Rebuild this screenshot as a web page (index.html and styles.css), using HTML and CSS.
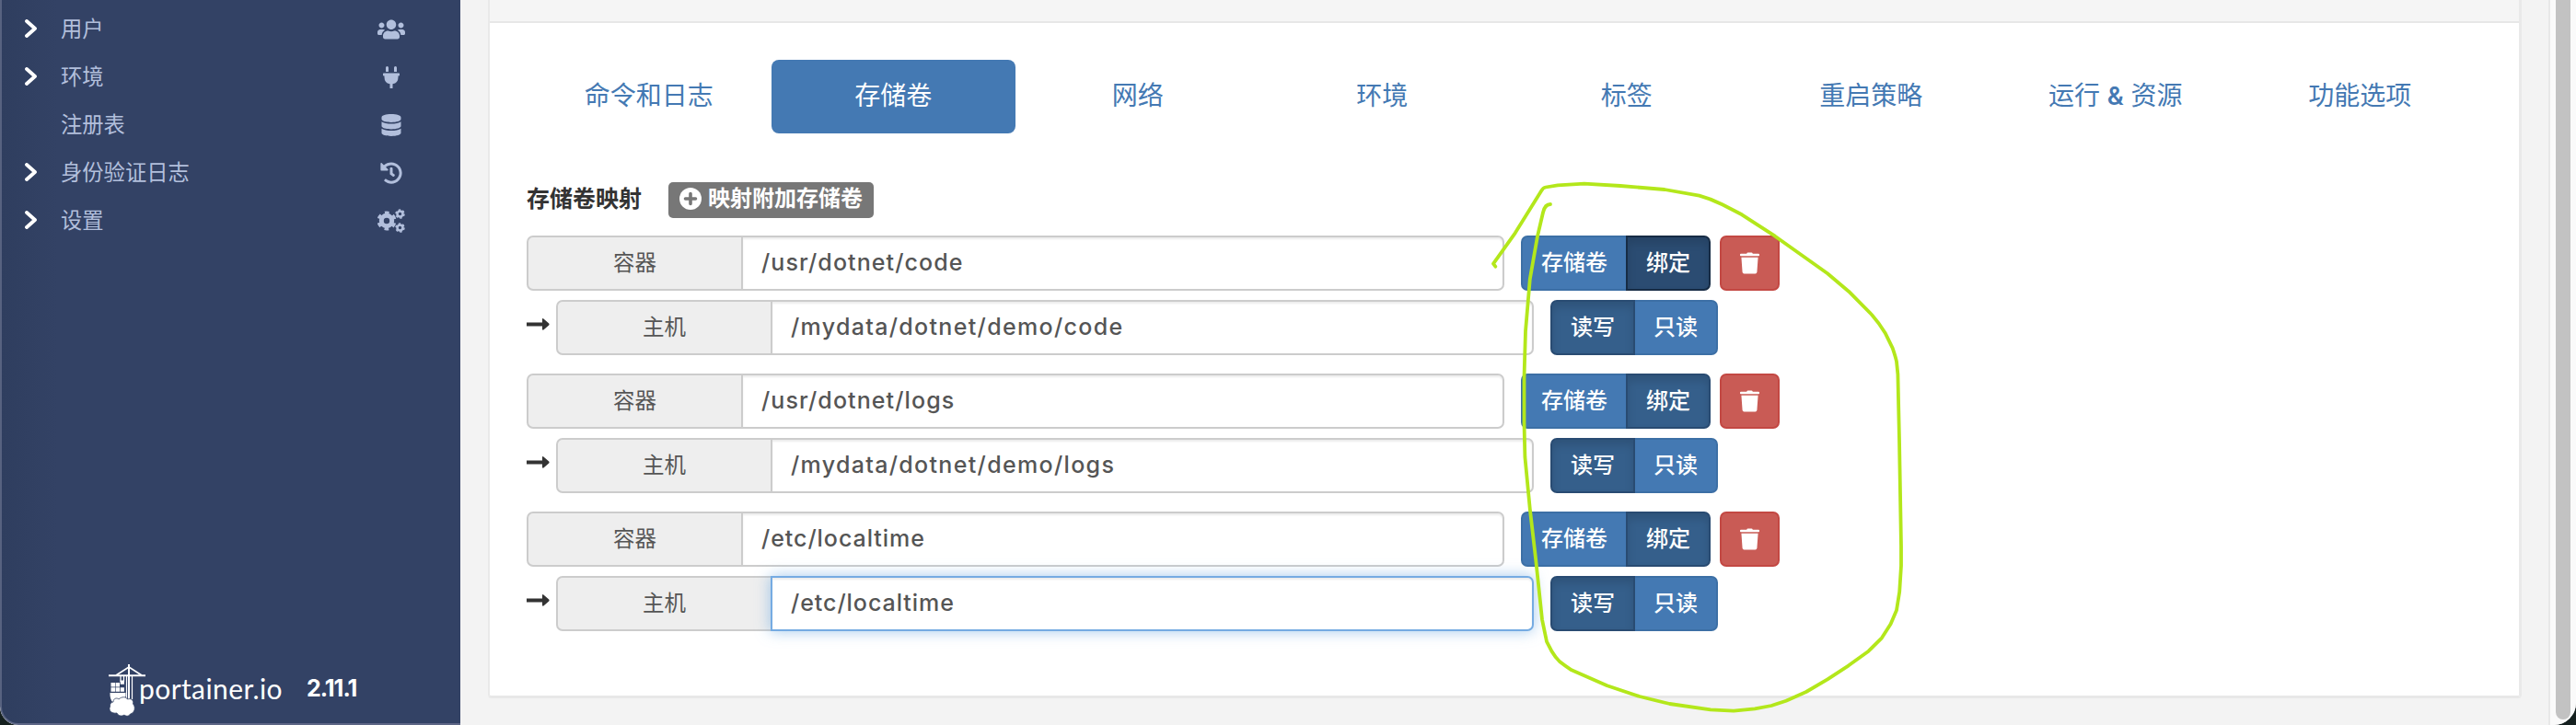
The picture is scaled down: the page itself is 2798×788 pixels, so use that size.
FILE: index.html
```html
<!DOCTYPE html>
<html lang="zh-CN">
<head>
<meta charset="utf-8">
<title>Portainer</title>
<link rel="stylesheet" href="styles.css">
</head>
<body>
<div class="window">
  <aside class="sidebar">
    <ul class="menu">
      <li class="menu-item"><svg class="chevron" viewBox="0 0 14 20"><path d="M2 2l9 8-9 8"/></svg><span class="menu-label">用户</span>
        <svg class="menu-icon" viewBox="0 0 640 512"><path d="M96 224c35.300 0 64-28.700 64-64s-28.700-64-64-64-64 28.700-64 64 28.700 64 64 64zm448 0c35.300 0 64-28.700 64-64s-28.700-64-64-64-64 28.700-64 64 28.700 64 64 64zm32 32h-64c-17.600 0-33.500 7.100-45.100 18.600 40.300 22.100 68.900 62 75.100 109.400h66c17.700 0 32-14.300 32-32v-32c0-35.300-28.700-64-64-64zm-256 0c61.900 0 112-50.100 112-112S381.900 32 320 32 208 82.100 208 144s50.100 112 112 112zm76.800 32h-8.300c-20.800 10-43.900 16-68.500 16s-47.600-6-68.500-16h-8.300C179.600 288 128 339.600 128 403.200V432c0 26.500 21.500 48 48 48h288c26.500 0 48-21.500 48-48v-28.800c0-63.600-51.600-115.200-115.200-115.200zm-223.700-13.400C161.500 263.100 145.600 256 128 256H64c-35.300 0-64 28.700-64 64v32c0 17.700 14.300 32 32 32h65.900c6.300-47.400 34.900-87.300 75.200-109.400z"/></svg></li>
      <li class="menu-item"><svg class="chevron" viewBox="0 0 14 20"><path d="M2 2l9 8-9 8"/></svg><span class="menu-label">环境</span>
        <svg class="menu-icon" viewBox="0 0 384 512"><path d="M320 32a32 32 0 0 0-64 0v96h64zm48 128H16a16 16 0 0 0-16 16v32a16 16 0 0 0 16 16h16v32a160.100 160.100 0 0 0 128 156.800V512h64v-99.200A160.100 160.100 0 0 0 352 256v-32h16a16 16 0 0 0 16-16v-32a16 16 0 0 0-16-16zM128 32a32 32 0 0 0-64 0v96h64z"/></svg></li>
      <li class="menu-item"><span class="chevron"></span><span class="menu-label">注册表</span>
        <svg class="menu-icon" viewBox="0 0 448 512"><path d="M448 73.100v45.800C448 159.100 347.700 192 224 192S0 159.100 0 118.900V73.100C0 32.900 100.300 0 224 0s224 32.900 224 73.100zM448 176v102.900C448 319.100 347.700 352 224 352S0 319.100 0 278.900V176c48.100 33.100 136.200 48.600 224 48.600S399.900 209.100 448 176zm0 160v102.900C448 479.100 347.700 512 224 512S0 479.100 0 438.900V336c48.100 33.100 136.200 48.600 224 48.600S399.900 369.100 448 336z"/></svg></li>
      <li class="menu-item"><svg class="chevron" viewBox="0 0 14 20"><path d="M2 2l9 8-9 8"/></svg><span class="menu-label">身份验证日志</span>
        <svg class="menu-icon" viewBox="0 0 512 512"><path d="M504 255.500c.3 136.600-111.200 248.400-247.800 248.500-59 0-113.200-20.500-155.800-54.900-11.100-8.900-11.900-25.500-1.800-35.600l11.300-11.300c8.600-8.600 22.400-9.600 31.900-2C173.100 425.100 212.900 440 256 440c101.700 0 184-82.300 184-184 0-101.700-82.300-184-184-184-48.800 0-93.100 19-126.100 49.900l50.800 50.800c10.100 10.100 2.900 27.300-11.300 27.300H24c-8.800 0-16-7.200-16-16V38.600c0-14.300 17.200-21.400 27.300-11.300l49.400 49.400C129.200 34.100 189.600 8 256 8c136.800 0 247.700 110.800 248 247.500zM323.100 334.200l9.800-12.600c8.100-10.500 6.300-25.500-4.200-33.700L288 256.300V152c0-13.300-10.700-24-24-24h-16c-13.300 0-24 10.700-24 24v135.700l65.400 50.900c10.500 8.100 25.500 6.300 33.700-4.400z"/></svg></li>
      <li class="menu-item"><svg class="chevron" viewBox="0 0 14 20"><path d="M2 2l9 8-9 8"/></svg><span class="menu-label">设置</span>
        <svg class="menu-icon gears" viewBox="0 0 30 26"><circle cx="10" cy="13" r="5.700" stroke-width="5"/><circle cx="10" cy="13" r="9" stroke-width="3" stroke-dasharray="4.700 4.725" stroke-dashoffset="-2.360"/><g stroke-width="2.600"><circle cx="24.500" cy="5.500" r="3"/><circle cx="24.500" cy="20.500" r="3"/></g><g stroke-width="1.500" stroke-dasharray="2.400 2.312"><circle cx="24.500" cy="5.500" r="4.500"/><circle cx="24.500" cy="20.500" r="4.500"/></g></svg></li>
    </ul>
    <footer class="brand">
      <svg class="crane" viewBox="0 0 40 60"><g fill="none" stroke="#fff"><path stroke-width="2" d="M22 0v38M0 12.200h40"/><path stroke-width="1.600" d="M8 12L22 3l14 9"/><path stroke-width="1.200" d="M13 13v6M16.500 13v6M19.500 13v25M25.500 13v25"/></g><path fill="#fff" d="M2.500 20h4.500v4.500H2.500zM7.600 20H12v4.500H7.600zM2.500 25.200H7v4.500H2.500zM7.600 25.200H12v4.500H7.600zM12.700 17.500h4.200v4.200h-4.200zM12.700 25.200h4.200v4.500h-4.200zM1.500 31h17v4l-8 7H5q-4-4-3.500-11z"/><path fill="#fff" stroke="#334265" stroke-width=".8" d="M5 41c0-4 4-5 6-3 3-3 8-3 9.500 0 4-1.500 7 1.500 6 5 3.500 4 1.500 10-3 11-1.500 3-5 2.500-6.500 1-2.500 2-7 1-8-2C3 54-.5 50 1.500 46 1 43 3 41 5 41z"/></svg>
      <span class="brand-name">portainer.io</span>
      <span class="version">2.11.1</span>
    </footer>
  </aside>
  <main class="content">
    <section class="panel">
      <header class="panel-head"></header>
      <div class="panel-body">
        <nav class="tabs">
          <a class="tab">命令和日志</a><a class="tab active">存储卷</a><a class="tab">网络</a><a class="tab">环境</a><a class="tab">标签</a><a class="tab">重启策略</a><a class="tab">运行 <b class="amp">&amp;</b> 资源</a><a class="tab">功能选项</a>
        </nav>
        <div class="section-head">
          <span class="section-title">存储卷映射</span>
          <span class="badge"><svg class="plus" viewBox="0 0 24 24"><circle class="disc" cx="12" cy="12" r="12"/><path d="M12 6.500v11M6.500 12h11"/></svg>映射附加存储卷</span>
        </div>
        <div class="volume">
          <div class="row"><label class="group"><span class="addon">容器</span><span class="input"><span class="v1">/usr/dotnet/code</span></span></label><div class="btns"><span class="btn">存储卷</span><span class="btn on pressed">绑定</span></div><span class="btn danger"><svg class="trash" viewBox="0 0 22 24"><path d="M7.500 1.200Q8 0 9 0h4q1 0 1.500 1.200H21q1 0 1 1v1q0 .8-1 .8H1q-1 0-1-.8v-1q0-1 1-1zM1.500 5.500h19l-1.200 16.700q-.2 1.800-2 1.800H4.700q-1.800 0-2-1.800z"/></svg></span></div>
          <div class="row"><svg class="arrow" viewBox="0 0 25 13"><path d="M0 4.500h17V1.200q0-1.700 1.400-.8l5.800 5.200q.8.900 0 1.800l-5.800 5q-1.400.9-1.400-.8V8.500H0z"/></svg><label class="group"><span class="addon">主机</span><span class="input"><span class="v2">/mydata/dotnet/demo/code</span></span></label><div class="btns"><span class="btn on">读写</span><span class="btn">只读</span></div></div>
        </div>
        <div class="volume">
          <div class="row"><label class="group"><span class="addon">容器</span><span class="input"><span class="v1">/usr/dotnet/logs</span></span></label><div class="btns"><span class="btn">存储卷</span><span class="btn on">绑定</span></div><span class="btn danger"><svg class="trash" viewBox="0 0 22 24"><path d="M7.500 1.200Q8 0 9 0h4q1 0 1.500 1.200H21q1 0 1 1v1q0 .8-1 .8H1q-1 0-1-.8v-1q0-1 1-1zM1.500 5.500h19l-1.200 16.700q-.2 1.800-2 1.800H4.700q-1.800 0-2-1.800z"/></svg></span></div>
          <div class="row"><svg class="arrow" viewBox="0 0 25 13"><path d="M0 4.500h17V1.200q0-1.700 1.400-.8l5.800 5.200q.8.900 0 1.800l-5.800 5q-1.400.9-1.400-.8V8.500H0z"/></svg><label class="group"><span class="addon">主机</span><span class="input"><span class="v2">/mydata/dotnet/demo/logs</span></span></label><div class="btns"><span class="btn on">读写</span><span class="btn">只读</span></div></div>
        </div>
        <div class="volume">
          <div class="row"><label class="group"><span class="addon">容器</span><span class="input"><span class="v3">/etc/localtime</span></span></label><div class="btns"><span class="btn">存储卷</span><span class="btn on">绑定</span></div><span class="btn danger"><svg class="trash" viewBox="0 0 22 24"><path d="M7.500 1.200Q8 0 9 0h4q1 0 1.500 1.200H21q1 0 1 1v1q0 .8-1 .8H1q-1 0-1-.8v-1q0-1 1-1zM1.500 5.500h19l-1.200 16.700q-.2 1.800-2 1.800H4.700q-1.800 0-2-1.800z"/></svg></span></div>
          <div class="row"><svg class="arrow" viewBox="0 0 25 13"><path d="M0 4.500h17V1.200q0-1.700 1.400-.8l5.800 5.200q.8.900 0 1.800l-5.800 5q-1.400.9-1.400-.8V8.500H0z"/></svg><label class="group"><span class="addon">主机</span><span class="input focus"><span class="v3">/etc/localtime</span></span></label><div class="btns"><span class="btn on">读写</span><span class="btn">只读</span></div></div>
        </div>
      </div>
    </section>
  </main>
  <div class="scrollbar"><div class="thumb"></div></div>
</div>
<svg class="ink" viewBox="0 0 2798 788"><path d="M1624.300 289.700L1622 286.700 1645.700 253.300 1674.300 207.300Q1676 204 1679 203.500L1692 201.300 1720.700 199.700 1760 202 1808 206 1845.700 212.700Q1858 216 1870.700 222.300L1892 233.300 1928 256.700 1985 297.300 2008 316.700 2033 342Q2041 351 2047.500 361.700L2055.700 378.300Q2059 388 2060 393L2061.400 406.700 2063 478 2065 593.300V615L2063.200 643.300 2060 663.300 2053.600 678.300 2044 693.300 2029.600 707.700 2008 723.300 1985 738.300 1961.800 752 1940 761.700 1924 767 1906 770.300 1883 772.700 1858 771.300 1813.600 765 1781 757 1745.700 745.300 1707 728.300Q1699 723 1694 719 1689 714 1685.700 708.300L1680 697.300 1675 673.300 1668 606.700 1661.800 553.300 1656.400 496.700 1655.500 460V410L1657 360 1661.800 303.300 1670 256.700 1676 231Q1678 222 1684 222"/></svg>
</body>
</html>
```
FILE: styles.css
```css
* { box-sizing: border-box; }
body {
  margin: 0;
  background: #15201f;
  font-family: Inter, "Noto Sans CJK SC", sans-serif;
  font-size: 24px;
  color: #333;
}
.window {
  display: flex;
  width: 2798px;
  height: 788px;
  background: #f3f3f3;
  border-radius: 0 0 24px 20px;
  overflow: hidden;
}
.sidebar {
  display: flex;
  flex-direction: column;
  justify-content: space-between;
  width: 500px;
  background: linear-gradient(90deg, #2f3e5f, #334265 60px);
  border-left: 2px solid #576280;
  border-bottom: 2px solid #5d6686;
  border-bottom-left-radius: 20px;
}
.menu { list-style: none; margin: 0; padding: 5px 0 0; }
.menu-item {
  display: flex;
  align-items: center;
  height: 52px;
  padding: 0 60px 0 25px;
  color: #b2bfdc;
}
.chevron { width: 14px; height: 20px; margin-right: 25px; fill: none; stroke: #fff; stroke-width: 3.8; stroke-linecap: round; stroke-linejoin: round; }
.menu-label { flex: 1; font-size: 23.3px; line-height: 50px; padding-top: 2px; }
.menu-icon { width: 30px; height: 24px; margin: 2px 0 0; fill: #b2bfdc; }
.gears { fill: none; stroke: #b2bfdc; height: 26px; }
.brand { display: flex; height: 64px; padding-left: 116px; color: #fff; }
.crane { width: 40px; height: 60px; }
.brand-name { margin: 6px 0 0 -7px; width: 182px; font-family: Lato, sans-serif; font-size: 30px; line-height: 40px; letter-spacing: .4px; }
.version { margin-top: 6px; font-size: 25px; font-weight: 700; line-height: 40px; letter-spacing: -1px; }

.content { width: 2268px; padding-left: 30px; }
.panel { width: 2209px; height: 759px; border-left: 2px solid #e9e9e9; border-right: 3px solid #e9e9e9; border-bottom: 3px solid #e8e8e8; border-radius: 0 0 4px 4px; background: #fff; }
.panel-head { height: 25px; background: #f5f5f5; border-bottom: 2px solid #e7e7e7; }
.panel-body { padding: 40px; }
.tabs { display: grid; grid-template-columns: repeat(8, 1fr); height: 80px; }
.tab { color: #4479b3; font-size: 28px; line-height: 79px; text-align: center; border-radius: 8px; }
.tab.active { color: #fff; background: #4479b3; }
.amp { font-size: 27px; font-weight: 600; }
.section-head { display: flex; align-items: center; margin-top: 53px; height: 39px; }
.section-title { width: 154px; font-size: 25px; font-weight: 700; line-height: 34px; margin-top: -4px; }
.badge { display: flex; align-items: center; width: 223px; height: 39px; padding: 0 0 4px 12px; color: #fff; background: #777; border-radius: 5px; font-weight: 700; line-height: 34px; }
.plus { width: 24px; height: 24px; margin-right: 7px; fill: none; stroke: #777; stroke-width: 3.6; stroke-linecap: round; }
.disc { fill: #fff; stroke: none; }
.section-head + .volume { margin-top: 19px; }
.volume { display: flex; flex-direction: column; gap: 10px; margin-bottom: 20px; }
.row { display: flex; align-items: center; height: 60px; }
.arrow { width: 25px; height: 13px; margin: -8px 7px 0 0; fill: #333; }
.group { display: flex; width: 1062px; height: 60px; margin-right: 18px; }
.addon { width: 235px; margin-right: -2px; line-height: 56px; text-align: center; color: #555; background: #eee; border: 2px solid #ccc; border-radius: 7px 0 0 7px; font-size: 23.500px; }
.input { flex: 1; padding-left: 20px; line-height: 55px; color: #555; font-weight: 500; font-size: 25px; background: #fff; border: 2px solid #ccc; border-radius: 0 7px 7px 0; box-shadow: inset 0 2px 2px rgba(0,0,0,.075); }
.v1 { letter-spacing: 1.1px; }
.v2 { letter-spacing: 1.33px; }
.v3 { letter-spacing: .95px; }
.focus { border-color: #75abe2; position: relative; box-shadow: inset 0 2px 2px rgba(0,0,0,.075), 0 0 16px rgba(102,165,225,.6); }
.btns { display: flex; margin-right: 10px; }
.btn { height: 60px; padding: 0 20px; line-height: 55px; font-weight: 500; color: #fff; background: #4479b3; border: 2px solid #3c6fa5; border-radius: 7px; }
.btns .btn:first-child { border-radius: 7px 0 0 7px; border-right-color: #4479b3; }
.btns .btn:last-child { margin-left: -2px; border-radius: 0 7px 7px 0; }
.btns .btn:last-child:not(.on) { border-left-color: #4479b3; }
.btns .btn.on { position: relative; background: #355f8b; border-color: #294b72; box-shadow: inset 0 6px 10px rgba(0,0,0,.125); }
.btns .btn.pressed { background: #2b4c72; border-color: #172c45; }
.danger { display: flex; align-items: center; justify-content: center; width: 65px; background: #c95b55; border-color: #c34843; }
.trash { width: 21px; height: 24px; margin-top: -1px; fill: #fff; }
.scrollbar { width: 30px; padding: 0 0 0 6px; background: #fafafa; border-left: 2px solid #e8e8e8; }
.thumb { width: 16px; height: 782px; background: #c2c2c2; border-radius: 0 0 8px 8px; }
.ink { position: absolute; inset: 0; width: 2798px; height: 788px; fill: none; stroke: #b3e71b; stroke-width: 3.8; stroke-linecap: round; stroke-linejoin: round; pointer-events: none; }
```
